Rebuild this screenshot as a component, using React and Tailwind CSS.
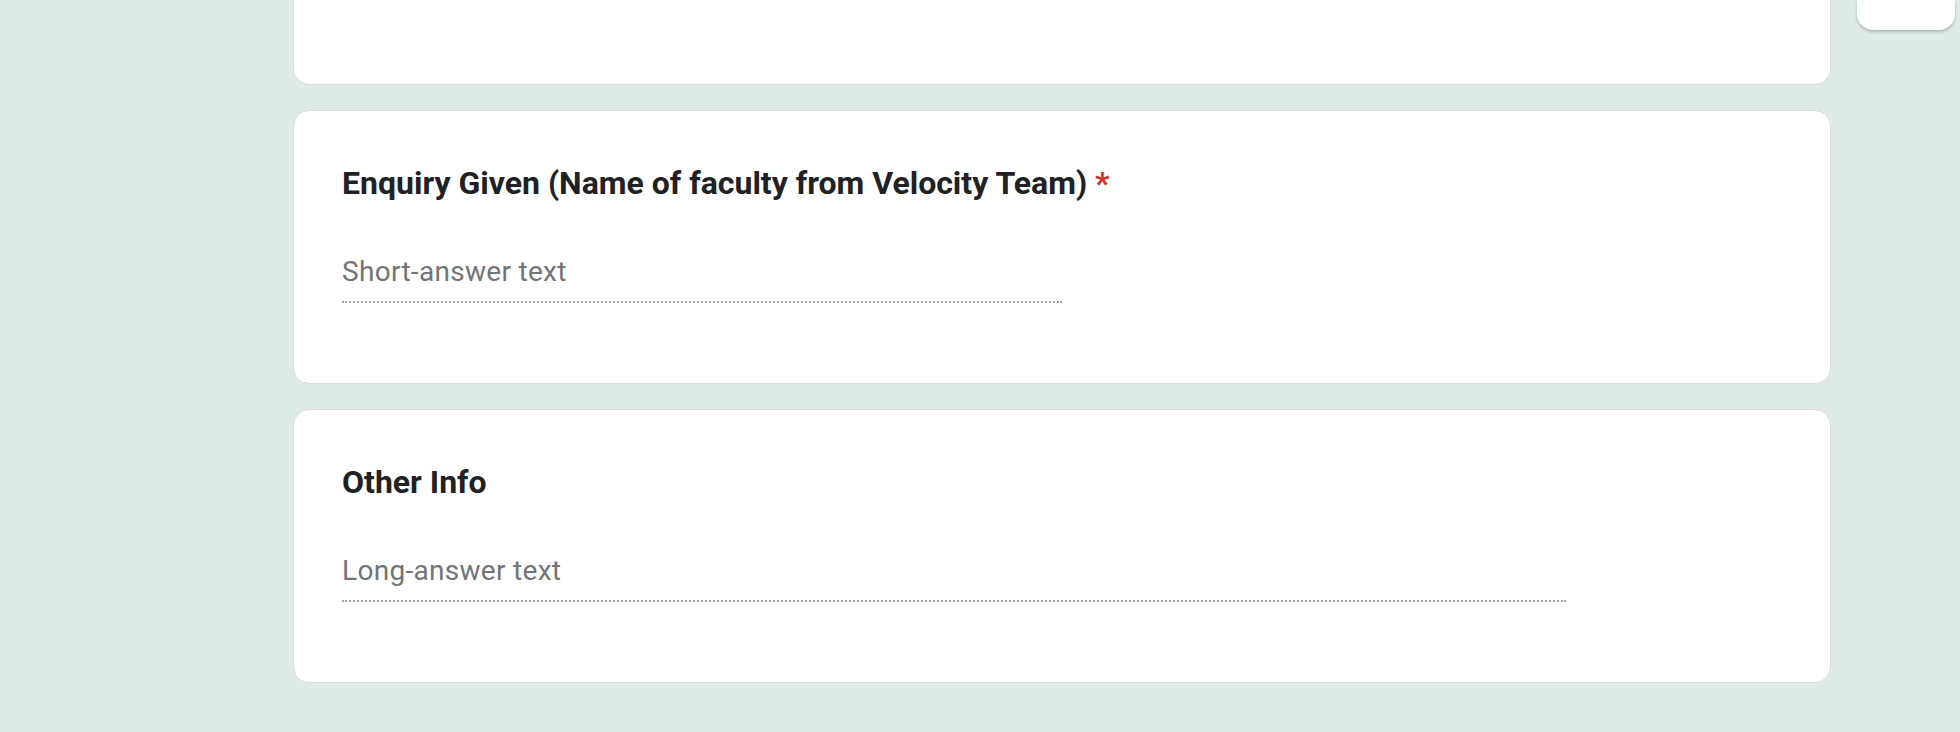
export default function App() {
  const font = { fontFamily: "Roboto, 'Liberation Sans', Arial, sans-serif" };
  return (
    <div
      className="w-[1960px] h-[732px] bg-[#deebe8] overflow-hidden flex items-start"
      style={font}
    >
      <div className="pl-[293px] flex flex-col gap-[25px] w-[1831px] shrink-0">
        <div className="h-[85px] bg-white border-x border-b border-[#dadce0] rounded-b-2xl" />

        <div className="bg-white border border-[#dadce0] rounded-2xl p-12 h-[274px]">
          <div className="text-[32px] leading-[48px] font-bold text-[#202124]">
            Enquiry Given (Name of faculty from Velocity Team){" "}
            <span className="text-[#d93025]">*</span>
          </div>
          <div className="mt-[41px] w-[720px] border-b-2 border-dotted border-[#a3a3a3] pb-[5px]">
            <div className="text-[28px] leading-[48px] tracking-[0.3px] text-[#70757a]">Short-answer text</div>
          </div>
        </div>

        <div className="bg-white border border-[#dadce0] rounded-2xl p-12 h-[274px]">
          <div className="text-[32px] leading-[48px] font-bold text-[#202124]">Other Info</div>
          <div className="mt-[41px] w-[1224px] border-b-2 border-dotted border-[#a3a3a3] pb-[5px]">
            <div className="text-[28px] leading-[48px] tracking-[0.3px] text-[#70757a]">Long-answer text</div>
          </div>
        </div>
      </div>

      <div className="ml-[26px] w-[98px] h-[30px] bg-white rounded-b-2xl shadow-[0_2px_3px_rgba(60,64,67,0.3)]" />
    </div>
  );
}
